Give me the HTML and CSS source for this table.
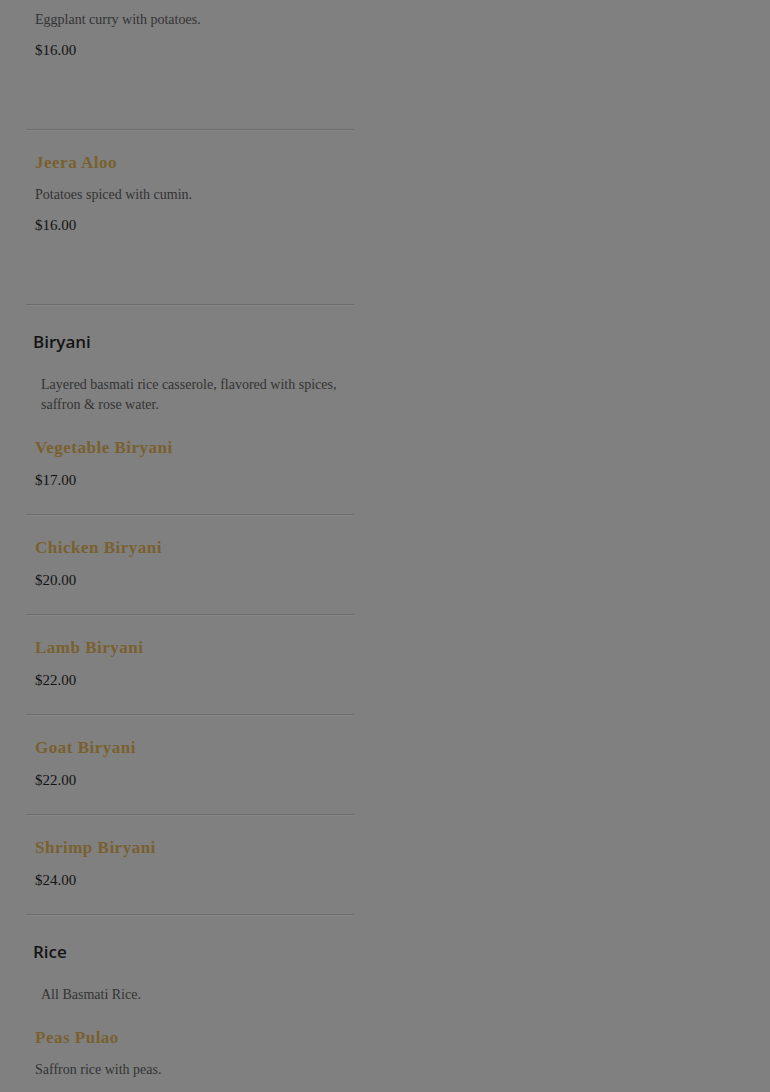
FILE: index.html
```html
<!DOCTYPE html>
<html lang="en">
  <head>
    <title>Menu</title>
    <link rel="stylesheet" href="styles.css">
  </head>
  <body>
    <main class="menu">
      <div class="menu-item menu-item-tall menu-item-cut">
        <p class="item-desc">Eggplant curry with potatoes.</p>
        <p class="item-price">$16.00</p>
      </div>
      <div class="menu-item menu-item-tall">
        <h3 class="item-name">Jeera Aloo</h3>
        <p class="item-desc">Potatoes spiced with cumin.</p>
        <p class="item-price">$16.00</p>
      </div>

      <section class="category">
        <h2 class="category-title">Biryani</h2>
        <p class="category-desc">Layered basmati rice casserole, flavored with spices, saffron &amp; rose water.</p>
      </section>
      <div class="menu-item">
        <h3 class="item-name">Vegetable Biryani</h3>
        <p class="item-price">$17.00</p>
      </div>
      <div class="menu-item">
        <h3 class="item-name">Chicken Biryani</h3>
        <p class="item-price">$20.00</p>
      </div>
      <div class="menu-item">
        <h3 class="item-name">Lamb Biryani</h3>
        <p class="item-price">$22.00</p>
      </div>
      <div class="menu-item">
        <h3 class="item-name">Goat Biryani</h3>
        <p class="item-price">$22.00</p>
      </div>
      <div class="menu-item">
        <h3 class="item-name">Shrimp Biryani</h3>
        <p class="item-price">$24.00</p>
      </div>

      <section class="category">
        <h2 class="category-title">Rice</h2>
        <p class="category-desc">All Basmati Rice.</p>
      </section>
      <div class="menu-item menu-item-tall">
        <h3 class="item-name">Peas Pulao</h3>
        <p class="item-desc">Saffron rice with peas.</p>
      </div>
    </main>
  </body>
</html>
```

FILE: styles.css
```css
html {
  font-family: "Liberation Serif", serif;
}

body {
  margin: 0;
  background-color: #808080;
  overflow: hidden;
}

.menu {
  width: 328px;
  margin-left: 26px;
}

.menu-item {
  padding: 21px 9px 24px;
  border-bottom: 1px solid #6c6c6c;
  box-shadow: 0 1px 0 #878787;
}

.menu-item-tall {
  padding-bottom: 69px;
}

.menu-item-cut {
  padding-top: 10px;
}

.item-name {
  margin: 0 0 10px;
  font-size: 17px;
  line-height: 24px;
  font-weight: bold;
  letter-spacing: 0.5px;
  color: #79602e;
}

.item-desc {
  margin: 0 0 10px;
  font-size: 14px;
  line-height: 20px;
  color: #333;
}

.item-price {
  margin: 0;
  font-size: 15px;
  line-height: 20px;
  color: #141414;
}

.category {
  padding: 24px 0 0 7px;
}

.category-title {
  margin: 0 0 20px;
  font-family: "Open Sans", sans-serif;
  font-size: 17px;
  line-height: 26px;
  font-weight: 600;
  color: #141414;
}

.category-desc {
  margin: 0;
  padding: 0 10px 0 8px;
  font-size: 14px;
  line-height: 20px;
  color: #333;
}
```
